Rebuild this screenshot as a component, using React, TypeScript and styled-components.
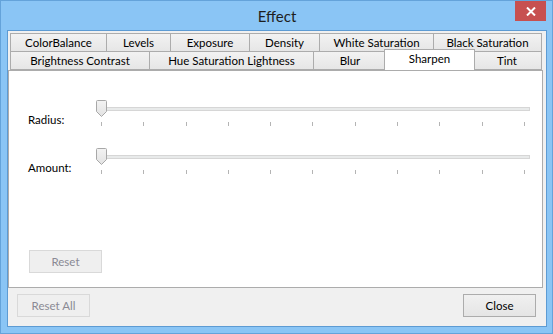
import { createGlobalStyle, styled } from "styled-components";

const GlobalStyle = createGlobalStyle`
  html, body {
    margin: 0;
    padding: 0;
    width: 553px;
    height: 334px;
    overflow: hidden;
    background: #8ac5f5;
  }
  * {
    box-sizing: border-box;
  }
`;

const FONT = `Lato, "Noto Sans", "Liberation Sans", sans-serif`;

type TabDef = { label: string; w: number; selected?: boolean };

const row1: TabDef[] = [
  { label: "ColorBalance", w: 97 },
  { label: "Levels", w: 65 },
  { label: "Exposure", w: 80 },
  { label: "Density", w: 71 },
  { label: "White Saturation", w: 115 },
  { label: "Black Saturation", w: 109 },
];

const row2: TabDef[] = [
  { label: "Brightness Contrast", w: 140 },
  { label: "Hue Saturation Lightness", w: 165 },
  { label: "Blur", w: 74 },
  { label: "Sharpen", w: 87, selected: true },
  { label: "Tint", w: 70 },
];

const sliders = ["Radius:", "Amount:"];
const TICKS = 11;

const Thumb = () => (
  <ThumbSvg width="11" height="17" viewBox="0 0 11 17">
    <defs>
      <linearGradient id="thumbFill" x1="0" y1="0" x2="0" y2="1">
        <stop offset="0" stopColor="#f3f3f3" />
        <stop offset="1" stopColor="#e2e2e2" />
      </linearGradient>
    </defs>
    <path
      d="M1.5 0.5 H9.5 Q10.5 0.5 10.5 1.5 V11.5 L5.5 16.5 L0.5 11.5 V1.5 Q0.5 0.5 1.5 0.5 Z"
      fill="url(#thumbFill)"
      stroke="#a8a8a8"
    />
  </ThumbSvg>
);

const App = () => {
  return (
    <Window>
      <GlobalStyle />
      <TitleBar>
        <span />
        <Title>Effect</Title>
        <CloseBox>
          <svg width="10" height="9" viewBox="0 0 10 9">
            <path d="M1 0.5 L9 8.5 M9 0.5 L1 8.5" stroke="#fff" strokeWidth="2" />
          </svg>
        </CloseBox>
      </TitleBar>
      <Client>
        <TabStrip>
          <TabRow>
            {row1.map((t) => (
              <Tab key={t.label} $w={t.w}>
                {t.label}
              </Tab>
            ))}
          </TabRow>
          <TabRow>
            {row2.map((t) => (
              <Tab key={t.label} $w={t.w} $selected={t.selected}>
                {t.label}
              </Tab>
            ))}
          </TabRow>
        </TabStrip>
        <TabPage>
          {sliders.map((s) => (
            <SliderRow key={s}>
              <SliderLabel>{s}</SliderLabel>
              <Slider>
                <Thumb />
                <Track />
                <Ticks>
                  {Array.from({ length: TICKS }).map((_, i) => (
                    <Tick key={i} />
                  ))}
                </Ticks>
              </Slider>
            </SliderRow>
          ))}
          <ResetButton disabled>Reset</ResetButton>
        </TabPage>
        <Footer>
          <Button disabled>Reset All</Button>
          <Button>Close</Button>
        </Footer>
      </Client>
    </Window>
  );
};

export default App;

const Window = styled.div({
  width: "553px",
  height: "334px",
  background: "#8ac5f5",
  border: "1px solid #64a3da",
  padding: "0 5px 6px 6px",
  display: "flex",
  flexDirection: "column",
  fontFamily: FONT,
  fontSize: "11.5px",
  color: "#000",
});

const TitleBar = styled.div({
  height: "29px",
  display: "grid",
  gridTemplateColumns: "1fr auto 1fr",
  alignItems: "start",
});

const Title = styled.div({
  fontSize: "15px",
  color: "#1e1e1e",
  lineHeight: "30px",
});

const CloseBox = styled.div({
  justifySelf: "end",
  marginRight: "1px",
  width: "31px",
  height: "20px",
  background: "#c75050",
  display: "flex",
  alignItems: "center",
  justifyContent: "center",
});

const Client = styled.div({
  flex: 1,
  background: "#f0f0f0",
  border: "1px solid #5d9bd3",
  display: "flex",
  flexDirection: "column",
  padding: "2px 3px 0 0",
});

const TabStrip = styled.div({
  display: "flex",
  flexDirection: "column",
  paddingLeft: "2px",
});

const TabRow = styled.div({
  display: "flex",
  height: "18px",
});

const Tab = styled.div<{ $w: number; $selected?: boolean }>((p) => ({
  width: `${p.$selected ? p.$w + 4 : p.$w}px`,
  height: p.$selected ? "21px" : "19px",
  marginRight: p.$selected ? "-3px" : "-1px",
  marginLeft: p.$selected ? "-2px" : "0",
  marginTop: p.$selected ? "-2px" : "0",
  border: "1px solid #acacac",
  borderBottom: p.$selected ? "none" : "1px solid #acacac",
  background: p.$selected ? "#fff" : "linear-gradient(#f2f2f2, #e6e6e6)",
  position: "relative",
  zIndex: p.$selected ? 2 : 0,
  display: "flex",
  justifyContent: "center",
  alignItems: "center",
  paddingBottom: p.$selected ? "3px" : "1px",
  whiteSpace: "nowrap",
  color: "#000",
}));

const TabPage = styled.div({
  marginTop: "1px",
  height: "218px",
  background: "#fff",
  border: "1px solid #acacac",
  position: "relative",
  zIndex: 1,
  padding: "29px 0 0 19px",
  display: "flex",
  flexDirection: "column",
  gap: "22px",
});

const SliderRow = styled.div({
  display: "grid",
  gridTemplateColumns: "68px 440px",
  height: "26px",
});

const SliderLabel = styled.div({
  paddingTop: "12px",
  lineHeight: "16px",
});

const Slider = styled.div({
  position: "relative",
  display: "flex",
  flexDirection: "column",
});

const ThumbSvg = styled.svg({
  position: "absolute",
  left: 0,
  top: 0,
});

const Track = styled.div({
  marginTop: "7px",
  marginLeft: "4px",
  width: "430px",
  height: "4px",
  border: "1px solid #d6d6d6",
  background: "#e8eaea",
});

const Ticks = styled.div({
  marginTop: "11px",
  marginLeft: "5px",
  width: "424px",
  display: "flex",
  justifyContent: "space-between",
});

const Tick = styled.div({
  width: "1px",
  height: "4px",
  background: "#b4b4b4",
});

const Button = styled.button({
  width: "73px",
  height: "23px",
  fontFamily: FONT,
  fontSize: "11.5px",
  border: "1px solid #acacac",
  background: "linear-gradient(#f0f0f0, #e5e5e5)",
  color: "#000",
  padding: 0,
  "&:disabled": {
    border: "1px solid #d9d9d9",
    background: "#efefef",
    color: "#8a8a94",
  },
});

const ResetButton = styled(Button)({
  marginTop: "54px",
  marginLeft: "1px",
});

const Footer = styled.div({
  display: "flex",
  justifyContent: "space-between",
  padding: "6px 7px 0 9px",
});
